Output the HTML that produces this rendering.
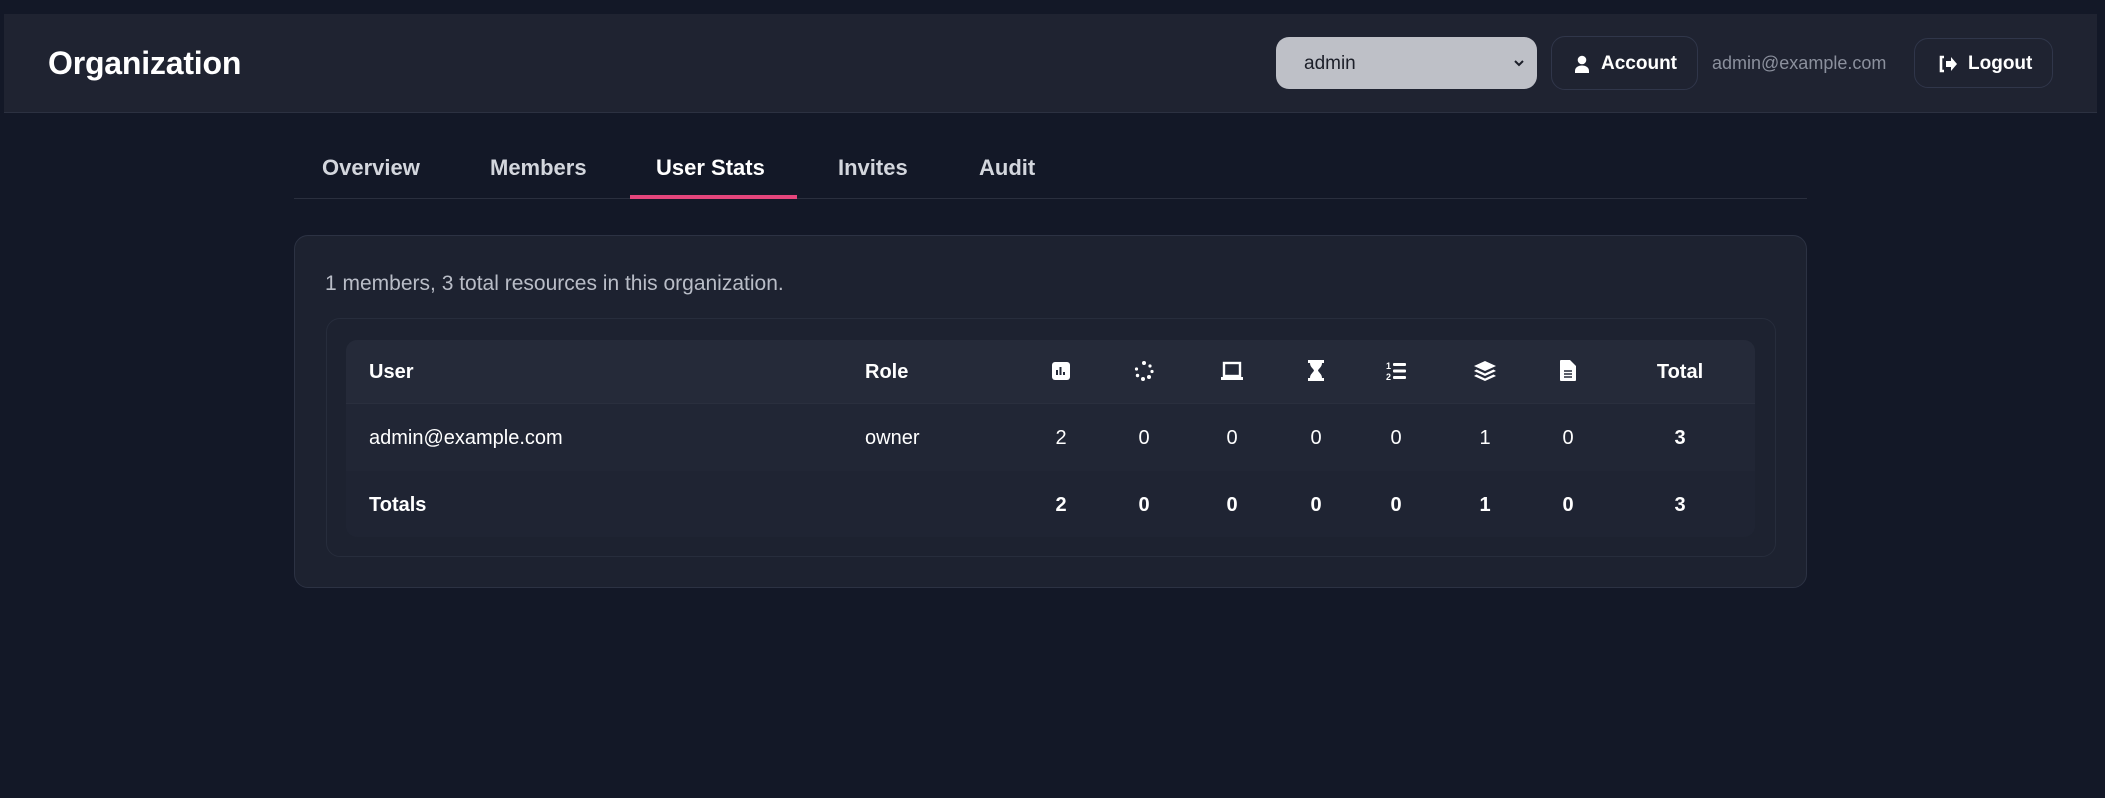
<!DOCTYPE html>
<html><head><meta charset="utf-8"><style>
*{box-sizing:border-box;margin:0;padding:0}
body{width:2105px;height:798px;background:#131827;font-family:"Liberation Sans",sans-serif;color:#fff;position:relative;overflow:hidden}
.abs{position:absolute}
.hdr{left:4px;top:14px;width:2093px;height:99px;background:#1f2331;border-bottom:1px solid #2c3141}
.title{left:48px;top:45px;font-size:32px;font-weight:bold;letter-spacing:-0.2px}
.sel{left:1276px;top:37px;width:261px;height:52px;background:#bec0c7;border-radius:13px;color:#1c1f29;font-size:19px;padding:16px 0 0 28px}
.btn{border:1px solid #30364a;border-radius:14px;font-size:19px;font-weight:bold;display:flex;align-items:center;padding-top:2px}
.tab{top:155px;font-size:22px;font-weight:bold;color:#d3d6dd}
.card{left:294px;top:235px;width:1513px;height:353px;background:#1d2230;border:1px solid #2c3243;border-radius:14px}
.inner{left:326px;top:318px;width:1450px;height:239px;border:1px solid #272d3c;border-radius:14px}
.tbl{left:346px;top:340px;width:1409px;height:197px;border-radius:11px;overflow:hidden;background:#222736}
.row{position:absolute;left:0;width:1409px;font-size:20px}
.c{position:absolute;transform:translateX(-50%);top:0}
</style></head><body>
<div class="abs hdr"></div>
<div class="abs title">Organization</div>
<div class="abs sel">admin<svg class="abs" style="right:12px;top:22px" width="12" height="8" viewBox="0 0 12 8"><path d="M2 2l4 4 4-4" stroke="#1c1f29" stroke-width="2" fill="none"/></svg></div>
<div class="abs btn" style="left:1551px;top:36px;width:147px;height:54px;padding-left:22px">
<svg width="16" height="18" viewBox="0 0 16 18" style="margin-right:11px"><circle cx="8" cy="5" r="4.3" fill="#fff"/><path d="M1 18v-2c0-3.5 3-5.5 7-5.5s7 2 7 5.5v2z" fill="#fff"/></svg>Account</div>
<div class="abs" style="left:1712px;top:53px;font-size:18px;color:#8b909d">admin@example.com</div>
<div class="abs btn" style="left:1914px;top:38px;width:139px;height:50px;padding-left:23px">
<svg width="20" height="18" viewBox="0 0 20 18" style="margin-right:10px"><path d="M6 2H3v14h3" stroke="#fff" stroke-width="2.6" fill="none"/><path d="M8 6h5V2l6 7-6 7v-4H8z" fill="#fff"/></svg>Logout</div>

<div class="abs tab" style="left:322px">Overview</div>
<div class="abs tab" style="left:490px">Members</div>
<div class="abs tab" style="left:656px;color:#fff">User Stats</div>
<div class="abs tab" style="left:838px">Invites</div>
<div class="abs tab" style="left:979px">Audit</div>
<div class="abs" style="left:294px;top:198px;width:1513px;height:1px;background:#2a2f3e"></div>
<div class="abs" style="left:630px;top:195px;width:167px;height:4px;background:#e5457c"></div>

<div class="abs card"></div>
<div class="abs" style="left:325px;top:272px;font-size:21px;color:#b9bdc7">1 members, 3 total resources in this organization.</div>
<div class="abs inner"></div>
<div class="abs tbl">
 <div class="row" style="top:0;height:64px;background:#252a39;border-bottom:1px solid #2a2f3e;font-weight:bold">
  <div class="abs" style="left:23px;top:21px">User</div>
  <div class="abs" style="left:519px;top:21px">Role</div>
  <svg class="c" style="left:715px;top:21px" width="18" height="20" viewBox="0 0 18 20"><rect x="0" y="1" width="18" height="18" rx="3" fill="#fff"/><path d="M5 14V9M8.5 14V6M12 14v-3" stroke="#222736" stroke-width="2"/></svg>
  <svg class="c" style="left:798px;top:21px" width="20" height="20" viewBox="0 0 20 20" fill="#fff"><circle cx="10" cy="2" r="2"/><circle cx="16" cy="5" r="1.6"/><circle cx="18" cy="10.5" r="1.6"/><circle cx="15" cy="16" r="2"/><circle cx="9" cy="18" r="2"/><circle cx="3.5" cy="14.5" r="1.7"/><circle cx="2.5" cy="8" r="1.6"/></svg>
  <svg class="c" style="left:886px;top:21px" width="22" height="20" viewBox="0 0 22 20"><rect x="3" y="2" width="16" height="13" fill="none" stroke="#fff" stroke-width="2.4"/><path d="M0 16h22v3H0z" fill="#fff"/></svg>
  <svg class="c" style="left:970px;top:20px" width="16" height="21" viewBox="0 0 16 21" fill="#fff"><path d="M0 0h16v3h-2c0 4-3 5-4 7.5 1 2.5 4 3.5 4 7.5h2v3H0v-3h2c0-4 3-5 4-7.5C5 8 2 7 2 3H0z"/></svg>
  <svg class="c" style="left:1050px;top:21px" width="20" height="20" viewBox="0 0 20 20" fill="#fff"><text x="0" y="8" font-size="9" font-weight="bold" font-family="Liberation Sans">1</text><text x="0" y="19" font-size="9" font-weight="bold" font-family="Liberation Sans">2</text><rect x="7" y="2" width="13" height="3" rx="1"/><rect x="7" y="8.5" width="13" height="3" rx="1"/><rect x="7" y="15" width="13" height="3" rx="1"/></svg>
  <svg class="c" style="left:1139px;top:21px" width="22" height="20" viewBox="0 0 22 20" fill="#fff"><path d="M11 0l11 5-11 5L0 5z"/><path d="M2.5 8.5L11 12.5l8.5-4 2.5 1.5-11 5-11-5z"/><path d="M2.5 13.5L11 17.5l8.5-4 2.5 1.5-11 5-11-5z"/></svg>
  <svg class="c" style="left:1222px;top:20px" width="16" height="21" viewBox="0 0 16 21"><path d="M1 0h9l6 6v14a1 1 0 0 1-1 1H1a1 1 0 0 1-1-1V1a1 1 0 0 1 1-1z" fill="#fff"/><path d="M4 11h8M4 14h8M4 17h8" stroke="#252a39" stroke-width="1.4"/></svg>
  <div class="c" style="left:1334px;top:21px">Total</div>
 </div>
 <div class="row" style="top:64px;height:67px;background:#212635">
  <div class="abs" style="left:23px;top:23px">admin@example.com</div>
  <div class="abs" style="left:519px;top:23px">owner</div>
  <div class="c" style="left:715px;top:23px">2</div><div class="c" style="left:798px;top:23px">0</div><div class="c" style="left:886px;top:23px">0</div><div class="c" style="left:970px;top:23px">0</div><div class="c" style="left:1050px;top:23px">0</div><div class="c" style="left:1139px;top:23px">1</div><div class="c" style="left:1222px;top:23px">0</div><div class="c" style="left:1334px;top:23px;font-weight:bold">3</div>
 </div>
 <div class="row" style="top:131px;height:66px;background:#1f2433;font-weight:bold">
  <div class="abs" style="left:23px;top:23px">Totals</div>
  <div class="c" style="left:715px;top:23px">2</div><div class="c" style="left:798px;top:23px">0</div><div class="c" style="left:886px;top:23px">0</div><div class="c" style="left:970px;top:23px">0</div><div class="c" style="left:1050px;top:23px">0</div><div class="c" style="left:1139px;top:23px">1</div><div class="c" style="left:1222px;top:23px">0</div><div class="c" style="left:1334px;top:23px">3</div>
 </div>
</div>
</body></html>
